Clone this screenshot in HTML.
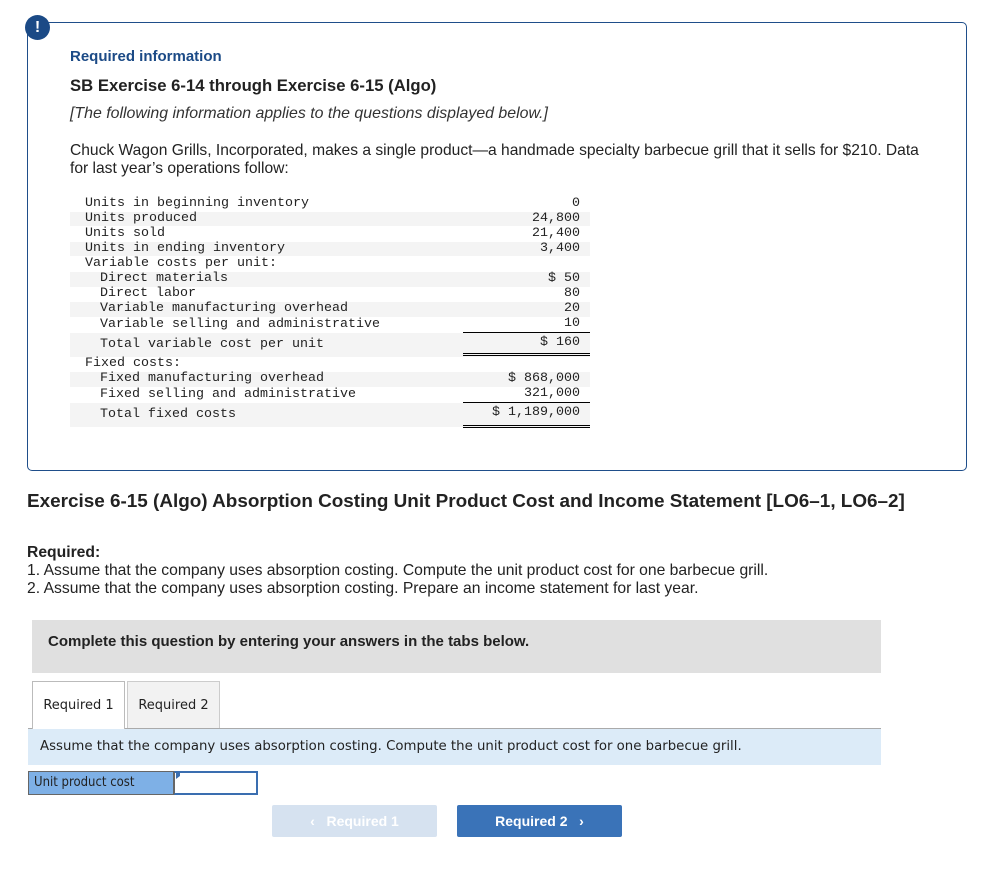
<!DOCTYPE html>
<html><head><style>
*{margin:0;padding:0;box-sizing:border-box}
body{width:991px;height:872px;background:#fff;font-family:"Liberation Sans",Arial,sans-serif;color:#222;position:relative;overflow:hidden}
.a{position:absolute;white-space:nowrap}
.box{position:absolute;left:27px;top:22px;width:940px;height:449px;border:1px solid #1f4e8a;border-radius:5px}
.icon{position:absolute;left:25px;top:15px;width:25px;height:25px;border-radius:50%;background:#1b4a86;color:#fff;font-weight:bold;font-size:16px;text-align:center;line-height:25px}
.mono{font-family:"Liberation Mono","Courier New",monospace;font-size:13.33px;color:#222}
.band{position:absolute;left:70px;width:520px;background:#f4f4f4}
.r{position:absolute;right:411px;text-align:right}
.ln{position:absolute;left:463px;width:127px;border-top:1px solid #000}
</style></head><body>
<div class="box"></div>
<div class="icon">!</div>
<div class="a" style="left:70px;top:48px;font-size:15px;font-weight:bold;color:#1b4a86">Required information</div>
<div class="a" style="left:70px;top:76px;font-size:16.7px;font-weight:bold;color:#222">SB Exercise 6-14 through Exercise 6-15 (Algo)</div>
<div class="a" style="left:70px;top:105px;font-size:15.9px;font-style:italic;color:#333">[The following information applies to the questions displayed below.]</div>
<div class="a" style="left:70px;top:142px;font-size:15.6px;line-height:18px;color:#222">Chuck Wagon Grills, Incorporated, makes a single product—a handmade specialty barbecue grill that it sells for $210. Data<br>for last year’s operations follow:</div>

<div class="band" style="top:212px;height:14px"></div>
<div class="band" style="top:242px;height:14px"></div>
<div class="band" style="top:272px;height:15px"></div>
<div class="band" style="top:302px;height:15px"></div>
<div class="band" style="top:333px;height:24px"></div>
<div class="band" style="top:372px;height:15px"></div>
<div class="band" style="top:403px;height:24px"></div>
<div class="ln" style="top:332px"></div>
<div class="ln" style="top:353px;border-bottom:1px solid #000;height:3px"></div>
<div class="ln" style="top:402px"></div>
<div class="ln" style="top:425px;border-bottom:1px solid #000;height:3px"></div>
<div class="mono">
<div class="a" style="left:85px;top:196px">Units in beginning inventory</div><div class="a r" style="top:196px">0</div>
<div class="a" style="left:85px;top:211px">Units produced</div><div class="a r" style="top:211px">24,800</div>
<div class="a" style="left:85px;top:226px">Units sold</div><div class="a r" style="top:226px">21,400</div>
<div class="a" style="left:85px;top:241px">Units in ending inventory</div><div class="a r" style="top:241px">3,400</div>
<div class="a" style="left:85px;top:256px">Variable costs per unit:</div>
<div class="a" style="left:100px;top:271px">Direct materials</div><div class="a r" style="top:271px">$ 50</div>
<div class="a" style="left:100px;top:286px">Direct labor</div><div class="a r" style="top:286px">80</div>
<div class="a" style="left:100px;top:301px">Variable manufacturing overhead</div><div class="a r" style="top:301px">20</div>
<div class="a" style="left:100px;top:317px">Variable selling and administrative</div><div class="a r" style="top:316px">10</div>
<div class="a" style="left:100px;top:337px">Total variable cost per unit</div><div class="a r" style="top:335px">$ 160</div>
<div class="a" style="left:85px;top:356px">Fixed costs:</div>
<div class="a" style="left:100px;top:371px">Fixed manufacturing overhead</div><div class="a r" style="top:371px">$ 868,000</div>
<div class="a" style="left:100px;top:387px">Fixed selling and administrative</div><div class="a r" style="top:386px">321,000</div>
<div class="a" style="left:100px;top:407px">Total fixed costs</div><div class="a r" style="top:405px">$ 1,189,000</div>
</div>

<div class="a" style="left:27px;top:491px;font-size:18.9px;font-weight:bold;color:#222">Exercise 6-15 (Algo) Absorption Costing Unit Product Cost and Income Statement [LO6–1, LO6–2]</div>
<div class="a" style="left:27px;top:544px;font-size:15.7px;line-height:18px;color:#222"><b>Required:</b><br>1. Assume that the company uses absorption costing. Compute the unit product cost for one barbecue grill.<br>2. Assume that the company uses absorption costing. Prepare an income statement for last year.</div>

<div class="a" style="left:32px;top:620px;width:849px;height:53px;background:#e0e0e0"></div>
<div class="a" style="left:48px;top:633px;font-size:15px;font-weight:bold;color:#222">Complete this question by entering your answers in the tabs below.</div>

<div class="a" style="left:28px;top:728px;width:853px;border-top:1px solid #aaa"></div>
<div class="a" style="left:32px;top:681px;width:93px;height:48px;border:1px solid #bbb;border-bottom:none;background:#fff;font-family:'DejaVu Sans',sans-serif;font-size:13px;padding-top:16px;text-align:center">Required 1</div>
<div class="a" style="left:127px;top:681px;width:93px;height:47px;border:1px solid #ccc;border-bottom:none;background:#f2f2f2;font-family:'DejaVu Sans',sans-serif;font-size:13px;padding-top:16px;text-align:center">Required 2</div>
<div class="a" style="left:28px;top:729px;width:853px;height:36px;background:#dcebf8"></div>
<div class="a" style="left:40px;top:739px;font-family:'DejaVu Sans',sans-serif;font-size:13.3px;color:#222">Assume that the company uses absorption costing. Compute the unit product cost for one barbecue grill.</div>

<div class="a" style="left:28px;top:771px;width:146px;height:24px;background:#7eb0e6;border:1px solid #666;font-size:13px;padding:3px 0 0 5px;font-family:'DejaVu Sans Condensed','DejaVu Sans',sans-serif">Unit product cost</div>
<div class="a" style="left:174px;top:771px;width:84px;height:24px;background:#fff;border:2px solid #3a6eb0;border-left:1px solid #666"></div>
<div class="a" style="left:176px;top:773px;width:0;height:0;border-top:3px solid #3a6eb0;border-bottom:3px solid transparent;border-left:4px solid #3a6eb0"></div>

<div class="a" style="left:272px;top:805px;width:165px;height:32px;background:#d6e2f0;border-radius:2px;color:#fff;font-weight:bold;font-size:14px;text-align:center;line-height:32px">‹&nbsp;&nbsp; Required 1</div>
<div class="a" style="left:457px;top:805px;width:165px;height:32px;background:#3a73b8;border-radius:2px;color:#fff;font-weight:bold;font-size:14px;text-align:center;line-height:32px">Required 2 &nbsp;&nbsp;›</div>
</body></html>
